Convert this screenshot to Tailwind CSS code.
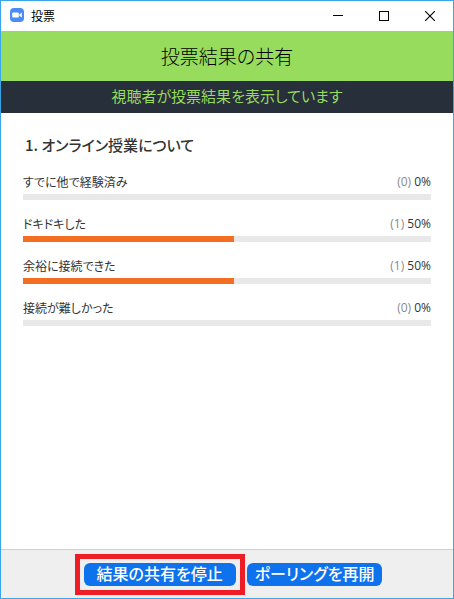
<!DOCTYPE html>
<html lang="ja">
<head>
    <meta charset="UTF-8">
    <meta name="viewport" content="width=device-width, initial-scale=1.0">
    <title>投票</title>
    <script src="https://cdn.jsdelivr.net/npm/@tailwindcss/browser@4"></script>
</head>
<body class="flex min-h-screen flex-col border border-[#3aa6ea] bg-white font-['Noto_Sans_CJK_JP',sans-serif] text-[#333] [font-feature-settings:'palt']">
    <!-- Title bar -->
    <div class="flex h-[30px] items-center justify-between pl-2">
        <div class="flex items-center gap-1.5 text-xs text-black">
            <svg class="size-4" viewBox="0 0 16 16" aria-hidden="true">
                <rect x="1" y="0" width="14" height="14" rx="4" fill="#4a8cf7"/>
                <rect x="3.2" y="4.4" width="6.6" height="5.2" rx="1.2" fill="#fff"/>
                <path d="M10.3 6.5 12.8 4.6v4.8L10.3 7.8z" fill="#fff"/>
            </svg>
            <span>投票</span>
        </div>
        <div class="flex self-stretch text-black">
            <button type="button" aria-label="最小化" class="flex w-[46px] items-center justify-center">
                <svg class="size-[10px]" viewBox="0 0 10 10" fill="none" stroke="currentColor" shape-rendering="crispEdges"><path d="M0 4.5h10"/></svg>
            </button>
            <button type="button" aria-label="最大化" class="flex w-[46px] items-center justify-center">
                <svg class="size-[10px]" viewBox="0 0 10 10" fill="none" stroke="currentColor" shape-rendering="crispEdges"><path d="M.5.5h9v9h-9z"/></svg>
            </button>
            <button type="button" aria-label="閉じる" class="flex w-[46px] items-center justify-center">
                <svg class="size-[10px]" viewBox="0 0 10 10" fill="none" stroke="currentColor" stroke-width="1.1"><path d="M0 0l10 10M10 0L0 10"/></svg>
            </button>
        </div>
    </div>

    <!-- Poll header -->
    <header class="text-center">
        <h1 class="bg-[#97dc5d] text-[19px] leading-[50px] font-light text-black">投票結果の共有</h1>
        <p class="bg-[#262f3a] pb-0.5 text-[15px] leading-[30px] text-[#97dc5d]">視聴者が投票結果を表示しています</p>
    </header>

    <!-- Results -->
    <main class="grow px-[22px] pt-5">
        <h2 class="px-0.5 text-[15px] leading-6 font-medium">1. オンライン授業について</h2>
        <ul class="mt-[15px] flex flex-col gap-3.5 text-xs leading-5">
            <li>
                <div class="flex justify-between">
                    <span>すでに他で経験済み</span>
                    <span class="font-['Open_Sans',sans-serif]"><span class="text-[#8a8a8a]">(0)</span> 0%</span>
                </div>
                <div class="mt-0.5 h-1.5 bg-[#e8e8e8]"></div>
            </li>
            <li>
                <div class="flex justify-between">
                    <span>ドキドキした</span>
                    <span class="font-['Open_Sans',sans-serif]"><span class="text-[#8a8a8a]">(1)</span> 50%</span>
                </div>
                <div class="mt-0.5 h-1.5 bg-[#e8e8e8]">
                    <div class="h-full bg-[#f36e21]" style="width: 51.8%"></div>
                </div>
            </li>
            <li>
                <div class="flex justify-between">
                    <span>余裕に接続できた</span>
                    <span class="font-['Open_Sans',sans-serif]"><span class="text-[#8a8a8a]">(1)</span> 50%</span>
                </div>
                <div class="mt-0.5 h-1.5 bg-[#e8e8e8]">
                    <div class="h-full bg-[#f36e21]" style="width: 51.8%"></div>
                </div>
            </li>
            <li>
                <div class="flex justify-between">
                    <span>接続が難しかった</span>
                    <span class="font-['Open_Sans',sans-serif]"><span class="text-[#8a8a8a]">(0)</span> 0%</span>
                </div>
                <div class="mt-0.5 h-1.5 bg-[#e8e8e8]"></div>
            </li>
        </ul>
    </main>

    <!-- Actions -->
    <footer class="flex justify-center gap-[11px] border-t border-[#cfcfcf] bg-[#efefef] pt-[13px] pb-3 pl-3 text-base font-medium text-white">
        <div class="relative">
            <button type="button" class="block rounded-md bg-[#0e72ed] px-[13px] pb-0.5 leading-[21px]">結果の共有を停止</button>
            <!-- Highlight frame -->
            <div class="pointer-events-none absolute -inset-[9px] border-5 border-[#ee1c25]"></div>
        </div>
        <button type="button" class="block rounded-md bg-[#0e72ed] px-2 pb-0.5 leading-[21px]">ポーリングを再開</button>
    </footer>
</body>
</html>
